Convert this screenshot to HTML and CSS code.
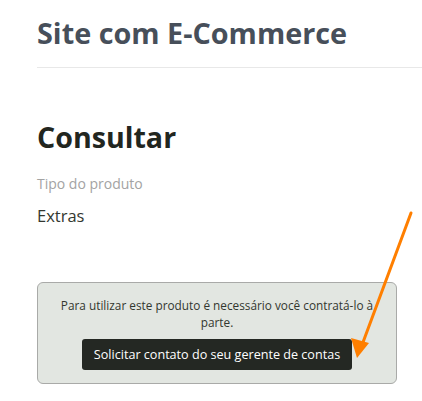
FILE: index.html
```html
<!DOCTYPE html>
<html lang="pt-BR">
<head>
    <meta charset="UTF-8">
    <meta name="viewport" content="width=device-width, initial-scale=1.0">
    <title>Consultar - Site com E-Commerce</title>
    <link rel="stylesheet" href="styles.css">
</head>
<body>
    <header class="page-header">
        <h1 class="page-title">Site com E-Commerce</h1>
    </header>

    <main class="content">
        <h2 class="section-title">Consultar</h2>

        <div class="field">
            <div class="field-label">Tipo do produto</div>
            <div class="field-value">Extras</div>
        </div>

        <div class="notice">
            <p class="notice-text">Para utilizar este produto é necessário você contratá-lo à parte.</p>
            <button class="notice-button">Solicitar contato do seu gerente de contas</button>
        </div>
    </main>

    <!-- annotation arrow pointing at the button -->
    <svg class="annotation" width="422" height="401" viewBox="0 0 422 401">
        <line x1="411" y1="213" x2="362" y2="345" stroke="#ff7f00" stroke-width="3" stroke-linecap="round"/>
        <polygon points="357,358 351,338 369,343" fill="#ff7f00"/>
    </svg>
</body>
</html>
```

FILE: styles.css
```css
body {
    margin: 0;
    font-family: "Open Sans", Arial, sans-serif;
    background: #fff;
    position: relative;
    width: 422px;
    height: 401px;
    overflow: hidden;
}

.page-header {
    margin-left: 37px;
    padding-top: 13px;
    height: 54px;
    border-bottom: 1px solid #e8e8e8;
}

.page-title {
    margin: 0;
    font-size: 28.8px;
    font-weight: 700;
    line-height: 40px;
    color: #474f5a;
}

.content {
    padding: 0 0 0 37px;
}

.section-title {
    margin: 49px 0 0;
    font-size: 28.6px;
    font-weight: 700;
    line-height: 40px;
    color: #22261f;
}

.field {
    margin-top: 17px;
}

.field-label {
    font-size: 14px;
    line-height: 20px;
    color: #a3a3a3;
}

.field-value {
    margin-top: 11px;
    font-size: 16.5px;
    font-weight: 500;
    line-height: 22px;
    color: #33372f;
}

.notice {
    width: 358px;
    margin-top: 55px;
    padding: 14px 0 13px;
    background: #e2e6e1;
    border: 1px solid #a9aaa8;
    border-radius: 6px;
    text-align: center;
}

.notice-text {
    margin: 0 auto;
    width: 320px;
    font-size: 11.8px;
    line-height: 17px;
    color: #33372f;
}

.notice-button {
    margin-top: 8px;
    width: 270px;
    height: 31px;
    padding: 0;
    background: #242823;
    color: #fff;
    border: none;
    border-radius: 3px;
    font-family: "Open Sans", Arial, sans-serif;
    font-size: 12.6px;
    cursor: pointer;
}

.annotation {
    position: absolute;
    left: 0;
    top: 0;
    pointer-events: none;
}
```
